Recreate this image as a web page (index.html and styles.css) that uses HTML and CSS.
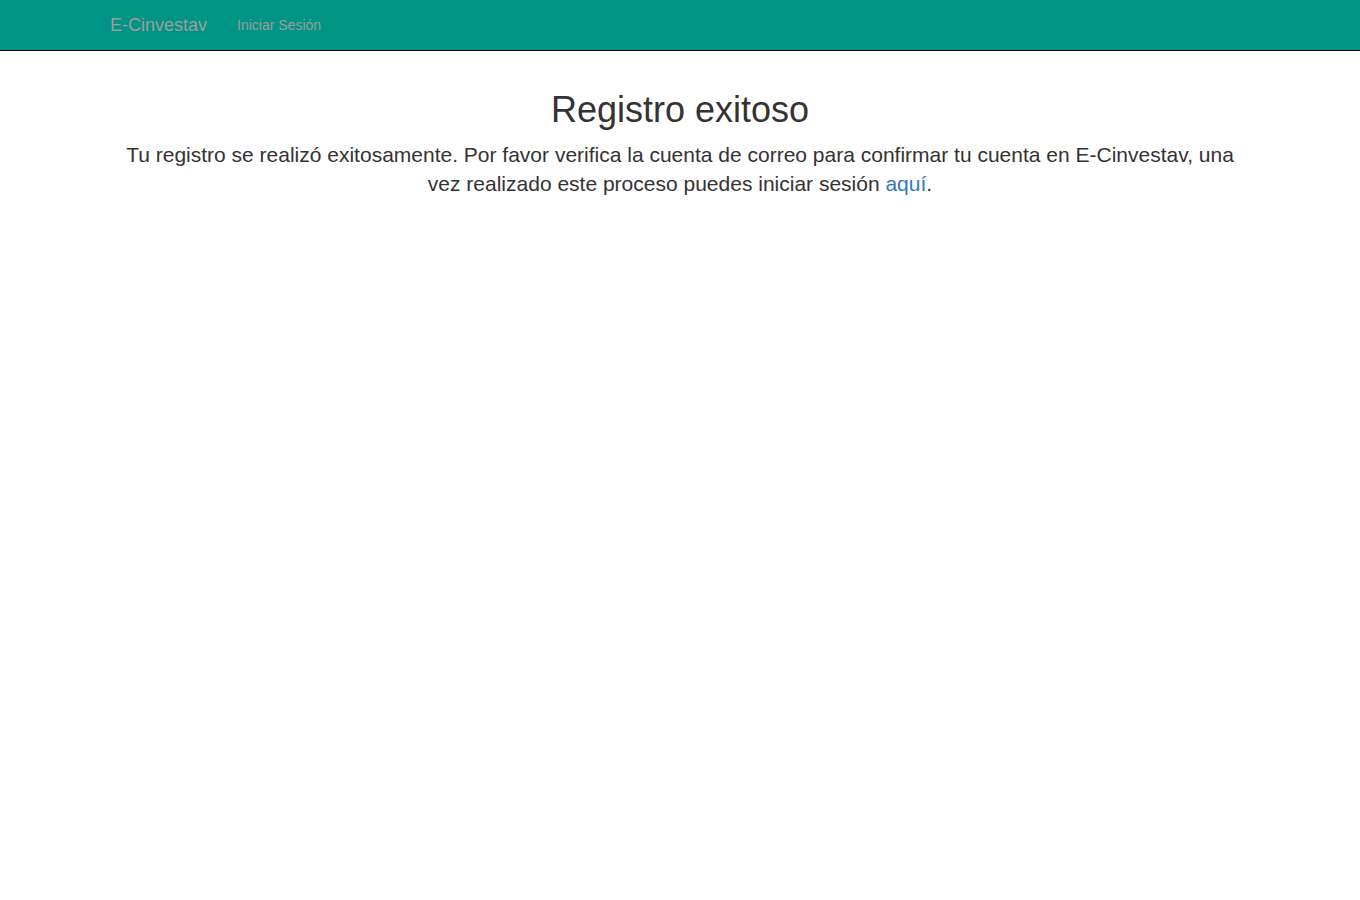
FILE: index.html
```html
<!DOCTYPE html>
<html lang="es">
<head>
  <meta charset="UTF-8">
  <title>Registro exitoso - E-Cinvestav</title>
  <link rel="stylesheet" href="styles.css">
</head>
<body>
  <!-- Barra de navegacion -->
  <nav class="navbar">
    <div class="container nav-inner">
      <a class="navbar-brand" href="#">E-Cinvestav</a>
      <ul class="nav">
        <li><a href="#">Iniciar Sesión</a></li>
      </ul>
    </div>
  </nav>

  <!-- Mensaje -->
  <div class="container">
    <div class="message">
      <h1>Registro exitoso</h1>
      <p class="lead">Tu registro se realizó exitosamente. Por favor verifica la cuenta de correo para confirmar tu cuenta en E-Cinvestav, una vez realizado este proceso puedes iniciar sesión <a href="#">aquí</a>.</p>
    </div>
  </div>
</body>
</html>
```

FILE: styles.css
```css
body {
  margin: 0;
  font-family: "Liberation Sans", Arial, sans-serif;
  font-size: 14px;
  line-height: 1.42857143;
  color: #333;
  background-color: #fff;
}

a {
  color: #337ab7;
  text-decoration: none;
}

.container {
  display: flow-root;
  width: 1170px;
  margin: 0 auto;
  padding: 0 15px;
  box-sizing: border-box;
}

/* Navbar */
.navbar {
  background-color: #009485;
  border-bottom: 1px solid #080808;
  min-height: 50px;
  margin-bottom: 20px;
}

.nav-inner {
  display: flex;
  align-items: center;
}

.navbar-brand {
  margin-left: -15px;
  padding: 15px;
  height: 50px;
  box-sizing: border-box;
  font-size: 18px;
  line-height: 20px;
  color: #9d9d9d;
}

.nav {
  list-style: none;
  margin: 0;
  padding: 0;
  display: flex;
}

.nav a {
  display: block;
  padding: 15px;
  line-height: 20px;
  color: #9d9d9d;
}

/* Mensaje */
.message {
  text-align: center;
}

h1 {
  margin: 19px 0 10px;
  font-size: 36px;
  font-weight: 500;
  line-height: 1.1;
}

.lead {
  margin: 0 0 20px;
  font-size: 21px;
  font-weight: 300;
  line-height: 1.4;
}
```
